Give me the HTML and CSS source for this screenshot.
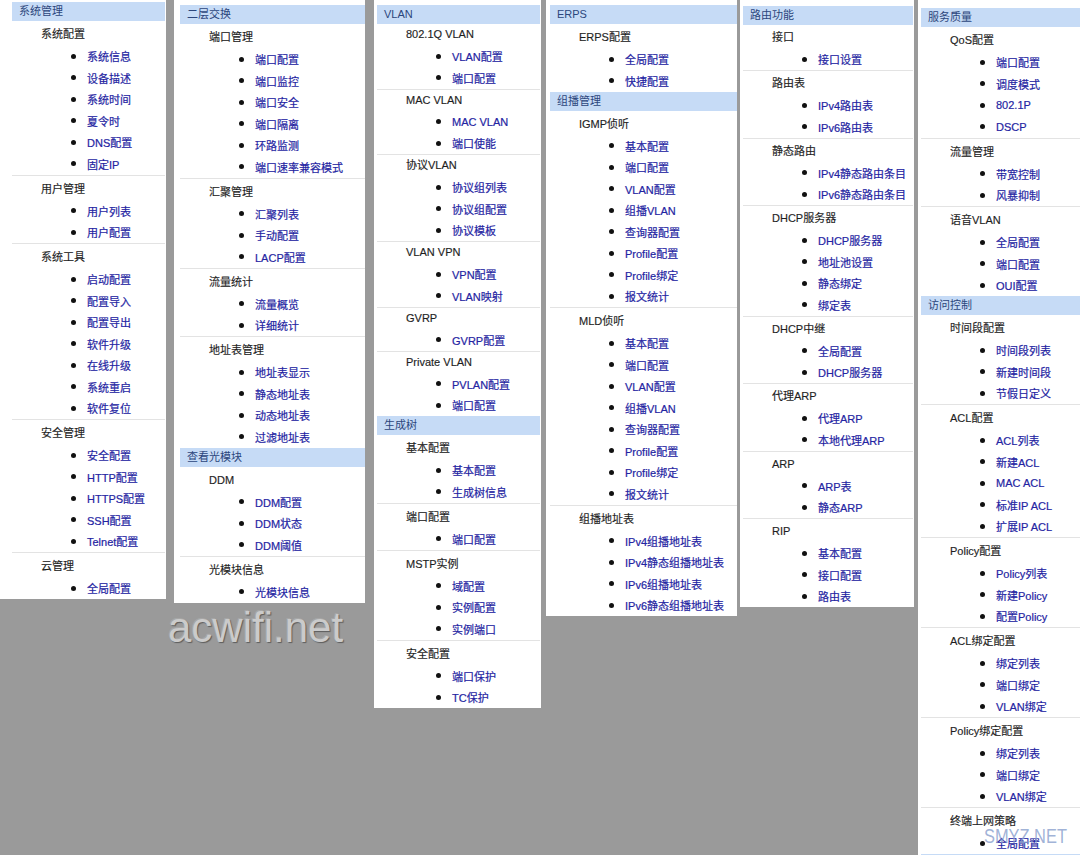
FILE: index.html
```html
<!DOCTYPE html>
<html lang="zh-CN">
<head>
<meta charset="utf-8">
<title>菜单</title>
<link rel="stylesheet" href="styles.css">
</head>
<body>
<div class="board">
  <div class="panel p1">
    <div class="head">系统管理</div>
    <div class="sec"><div class="label">系统配置</div>
      <ul><li>系统信息</li><li>设备描述</li><li>系统时间</li><li>夏令时</li><li>DNS配置</li><li>固定IP</li></ul></div>
    <div class="sec"><div class="label">用户管理</div>
      <ul><li>用户列表</li><li>用户配置</li></ul></div>
    <div class="sec"><div class="label">系统工具</div>
      <ul><li>启动配置</li><li>配置导入</li><li>配置导出</li><li>软件升级</li><li>在线升级</li><li>系统重启</li><li>软件复位</li></ul></div>
    <div class="sec"><div class="label">安全管理</div>
      <ul><li>安全配置</li><li>HTTP配置</li><li>HTTPS配置</li><li>SSH配置</li><li>Telnet配置</li></ul></div>
    <div class="sec"><div class="label">云管理</div>
      <ul><li>全局配置</li></ul></div>
  </div>

  <div class="panel p2">
    <div class="head">二层交换</div>
    <div class="sec"><div class="label">端口管理</div>
      <ul><li>端口配置</li><li>端口监控</li><li>端口安全</li><li>端口隔离</li><li>环路监测</li><li>端口速率兼容模式</li></ul></div>
    <div class="sec"><div class="label">汇聚管理</div>
      <ul><li>汇聚列表</li><li>手动配置</li><li>LACP配置</li></ul></div>
    <div class="sec"><div class="label">流量统计</div>
      <ul><li>流量概览</li><li>详细统计</li></ul></div>
    <div class="sec"><div class="label">地址表管理</div>
      <ul><li>地址表显示</li><li>静态地址表</li><li>动态地址表</li><li>过滤地址表</li></ul></div>
    <div class="head">查看光模块</div>
    <div class="sec"><div class="label">DDM</div>
      <ul><li>DDM配置</li><li>DDM状态</li><li>DDM阈值</li></ul></div>
    <div class="sec"><div class="label">光模块信息</div>
      <ul><li>光模块信息</li></ul></div>
  </div>

  <div class="panel p3">
    <div class="head">VLAN</div>
    <div class="sec flat"><div class="label">802.1Q VLAN</div>
      <ul><li>VLAN配置</li><li>端口配置</li></ul></div>
    <div class="sec flat"><div class="label">MAC VLAN</div>
      <ul><li>MAC VLAN</li><li>端口使能</li></ul></div>
    <div class="sec flat"><div class="label">协议VLAN</div>
      <ul><li>协议组列表</li><li>协议组配置</li><li>协议模板</li></ul></div>
    <div class="sec flat"><div class="label">VLAN VPN</div>
      <ul><li>VPN配置</li><li>VLAN映射</li></ul></div>
    <div class="sec flat"><div class="label">GVRP</div>
      <ul><li>GVRP配置</li></ul></div>
    <div class="sec flat"><div class="label">Private VLAN</div>
      <ul><li>PVLAN配置</li><li>端口配置</li></ul></div>
    <div class="head">生成树</div>
    <div class="sec"><div class="label">基本配置</div>
      <ul><li>基本配置</li><li>生成树信息</li></ul></div>
    <div class="sec"><div class="label">端口配置</div>
      <ul><li>端口配置</li></ul></div>
    <div class="sec"><div class="label">MSTP实例</div>
      <ul><li>域配置</li><li>实例配置</li><li>实例端口</li></ul></div>
    <div class="sec"><div class="label">安全配置</div>
      <ul><li>端口保护</li><li>TC保护</li></ul></div>
  </div>

  <div class="panel p4">
    <div class="head">ERPS</div>
    <div class="sec"><div class="label">ERPS配置</div>
      <ul><li>全局配置</li><li>快捷配置</li></ul></div>
    <div class="head">组播管理</div>
    <div class="sec"><div class="label">IGMP侦听</div>
      <ul><li>基本配置</li><li>端口配置</li><li>VLAN配置</li><li>组播VLAN</li><li>查询器配置</li><li>Profile配置</li><li>Profile绑定</li><li>报文统计</li></ul></div>
    <div class="sec"><div class="label">MLD侦听</div>
      <ul><li>基本配置</li><li>端口配置</li><li>VLAN配置</li><li>组播VLAN</li><li>查询器配置</li><li>Profile配置</li><li>Profile绑定</li><li>报文统计</li></ul></div>
    <div class="sec"><div class="label">组播地址表</div>
      <ul><li>IPv4组播地址表</li><li>IPv4静态组播地址表</li><li>IPv6组播地址表</li><li>IPv6静态组播地址表</li></ul></div>
  </div>

  <div class="panel p5">
    <div class="head">路由功能</div>
    <div class="sec"><div class="label">接口</div>
      <ul><li>接口设置</li></ul></div>
    <div class="sec"><div class="label">路由表</div>
      <ul><li>IPv4路由表</li><li>IPv6路由表</li></ul></div>
    <div class="sec"><div class="label">静态路由</div>
      <ul><li>IPv4静态路由条目</li><li>IPv6静态路由条目</li></ul></div>
    <div class="sec"><div class="label">DHCP服务器</div>
      <ul><li>DHCP服务器</li><li>地址池设置</li><li>静态绑定</li><li>绑定表</li></ul></div>
    <div class="sec"><div class="label">DHCP中继</div>
      <ul><li>全局配置</li><li>DHCP服务器</li></ul></div>
    <div class="sec"><div class="label">代理ARP</div>
      <ul><li>代理ARP</li><li>本地代理ARP</li></ul></div>
    <div class="sec"><div class="label">ARP</div>
      <ul><li>ARP表</li><li>静态ARP</li></ul></div>
    <div class="sec"><div class="label">RIP</div>
      <ul><li>基本配置</li><li>接口配置</li><li>路由表</li></ul></div>
  </div>

  <div class="panel p6">
    <div class="head">服务质量</div>
    <div class="sec"><div class="label">QoS配置</div>
      <ul><li>端口配置</li><li>调度模式</li><li>802.1P</li><li>DSCP</li></ul></div>
    <div class="sec"><div class="label">流量管理</div>
      <ul><li>带宽控制</li><li>风暴抑制</li></ul></div>
    <div class="sec"><div class="label">语音VLAN</div>
      <ul><li>全局配置</li><li>端口配置</li><li>OUI配置</li></ul></div>
    <div class="head">访问控制</div>
    <div class="sec"><div class="label">时间段配置</div>
      <ul><li>时间段列表</li><li>新建时间段</li><li>节假日定义</li></ul></div>
    <div class="sec"><div class="label">ACL配置</div>
      <ul><li>ACL列表</li><li>新建ACL</li><li>MAC ACL</li><li>标准IP ACL</li><li>扩展IP ACL</li></ul></div>
    <div class="sec"><div class="label">Policy配置</div>
      <ul><li>Policy列表</li><li>新建Policy</li><li>配置Policy</li></ul></div>
    <div class="sec"><div class="label">ACL绑定配置</div>
      <ul><li>绑定列表</li><li>端口绑定</li><li>VLAN绑定</li></ul></div>
    <div class="sec"><div class="label">Policy绑定配置</div>
      <ul><li>绑定列表</li><li>端口绑定</li><li>VLAN绑定</li></ul></div>
    <div class="sec"><div class="label">终端上网策略</div>
      <ul><li>全局配置</li></ul></div>
    <div class="head">&nbsp;</div>
  </div>
</div>
<div class="mark-ac">acwifi.net</div>
<div class="mark-smyz">SMYZ.NET</div>
</body>
</html>
```

FILE: styles.css
```css
html, body {
  margin: 0;
  padding: 0;
}
body {
  background: #9a9a9a;
  font-family: "Liberation Sans", "Noto Sans CJK SC", sans-serif;
  font-size: 11px;
  height: 855px;
  overflow: hidden;
  position: relative;
}
.board {
  display: flex;
  align-items: flex-start;
}
.panel {
  background: #fff;
  box-sizing: border-box;
}
.p1 { width: 166px; padding: 2px 1px 0 12px; }
.p2 { width: 191px; margin-left: 8px; padding: 5px 0 0 6px; }
.p3 { width: 167px; margin-left: 9px; padding: 5px 1px 0 3px; }
.p4 { width: 191px; margin-left: 5px; padding: 5px 0 0 4px; }
.p5 { width: 174px; margin-left: 3px; padding: 6px 1px 0 3px; }
.p6 { width: 162px; margin-left: 4px; padding: 8px 0 0 3px; }

.head {
  height: 19px;
  line-height: 19px;
  background: #c6dbf6;
  color: #2c467c;
  padding-left: 7px;
  white-space: nowrap;
}
.sec {
  padding-top: 3px;
}
.p5 .sec { padding-top: 2px; }
.sec.flat { padding-top: 0; }
.sec + .sec {
  border-top: 1px solid #e3e3e3;
}
.label {
  height: 21.5px;
  line-height: 21.5px;
  padding-left: 29px;
  color: #1e1e1e;
  white-space: nowrap;
  -webkit-text-stroke: 0.15px #1e1e1e;
}
.sec ul {
  list-style: none;
  margin: 0;
  padding: 0;
}
.sec li {
  height: 21.5px;
  display: flex;
  align-items: center;
  padding-left: 59px;
  color: #2424a2;
  white-space: nowrap;
  -webkit-text-stroke: 0.2px #2424a2;
}
.sec li::before {
  content: "";
  flex: none;
  width: 5px;
  height: 5px;
  border-radius: 50%;
  background: #111;
  margin-right: 11px;
}

.mark-ac {
  position: absolute;
  left: 168px;
  top: 607px;
  font-family: "Liberation Sans", sans-serif;
  font-size: 42px;
  line-height: 42px;
  color: #cbcbcb;
  text-shadow: 1px 1px 1px rgba(0, 0, 0, 0.4), -1px -1px 0 rgba(255, 255, 255, 0.15);
}
.mark-smyz {
  position: absolute;
  left: 984px;
  top: 826px;
  font-family: "Liberation Sans", sans-serif;
  font-size: 20px;
  line-height: 20px;
  color: rgba(135, 158, 205, 0.8);
  transform: scaleX(0.82);
  transform-origin: left center;
}
```
